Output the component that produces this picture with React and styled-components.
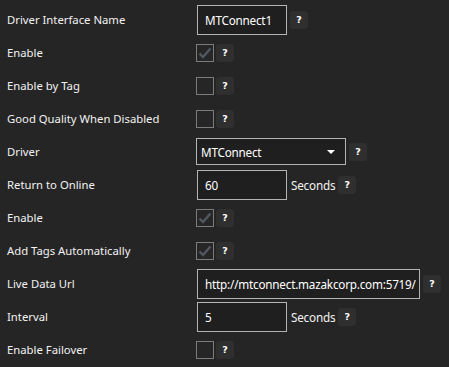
import React from 'react'
import styled, { createGlobalStyle } from 'styled-components'

const GlobalStyle = createGlobalStyle`
  html, body {
    margin: 0;
    background: #252525;
  }
  body {
    font-family: "Noto Sans", "Open Sans", sans-serif;
    color: #f2f2f2;
  }
`

const Form = styled.div`
  padding: 3px 0 0 7px;
  display: flex;
  flex-direction: column;
`
const Row = styled.div`
  display: flex;
  align-items: center;
  height: 33px;
`
const Label = styled.div`
  width: 189px;
  font-size: 11.3px;
  color: #f2f2f2;
  white-space: nowrap;
`
const Control = styled.div`
  display: flex;
  align-items: center;
`
const TextBox = styled.div`
  box-sizing: border-box;
  width: ${p => p.width || 90}px;
  height: 30px;
  margin-left: 1px;
  border: 1px solid #b4b4b4;
  background: #1f1f1f;
  padding: 0 7px;
  display: flex;
  align-items: center;
  font-size: 11.7px;
  letter-spacing: -0.2px;
  color: #fff;
  white-space: nowrap;
  overflow: hidden;
`
const Select = styled.div`
  box-sizing: border-box;
  width: 150px;
  height: 27px;
  border: 1px solid #b4b4b4;
  background: #1f1f1f;
  padding: 0 10px 0 4px;
  display: flex;
  align-items: center;
  justify-content: space-between;
  font-size: 11.7px;
  letter-spacing: -0.2px;
  color: #fff;
`
const Caret = styled.span`
  width: 0;
  height: 0;
  border-left: 4px solid transparent;
  border-right: 4px solid transparent;
  border-top: 4px solid #fff;
`
const Box = styled.div`
  box-sizing: border-box;
  width: 18px;
  height: 18px;
  border: 1px solid #7c7c7c;
  background: #262626;
  display: flex;
  align-items: center;
  justify-content: center;
`
const Unit = styled.span`
  font-size: 11.7px;
  letter-spacing: -0.2px;
  color: #f2f2f2;
  margin-left: 4px;
`
const Help = styled.div`
  width: 18px;
  height: 18px;
  border-radius: 3px;
  background: #2f2f2f;
  margin-left: ${p => p.gap || 2}px;
  display: flex;
  align-items: center;
  justify-content: center;
  font-family: "DejaVu Sans", sans-serif;
  font-weight: bold;
  font-size: 9.5px;
  color: #fff;
`

const Check = ({ checked }) => (
  <Box>
    {checked && (
      <svg width="14" height="12" viewBox="0 0 14 12">
        <path d="M1.5 6.5 L5 10 L12.5 1.5" fill="none" stroke="#525862" strokeWidth="2.4" />
      </svg>
    )}
  </Box>
)

const rows = [
  { label: 'Driver Interface Name', type: 'text', value: 'MTConnect1' },
  { label: 'Enable', type: 'check', checked: true },
  { label: 'Enable by Tag', type: 'check' },
  { label: 'Good Quality When Disabled', type: 'check' },
  { label: 'Driver', type: 'select', value: 'MTConnect' },
  { label: 'Return to Online', type: 'text', value: '60', unit: 'Seconds' },
  { label: 'Enable', type: 'check', checked: true },
  { label: 'Add Tags Automatically', type: 'check', checked: true },
  { label: 'Live Data Url', type: 'text', value: 'http://mtconnect.mazakcorp.com:5719/', width: 223 },
  { label: 'Interval', type: 'text', value: '5', unit: 'Seconds' },
  { label: 'Enable Failover', type: 'check' },
]

const App = () => (
  <>
    <GlobalStyle />
    <Form>
      {rows.map((r, i) => (
        <Row key={i}>
          <Label>{r.label}</Label>
          <Control>
            {r.type === 'text' && <TextBox width={r.width}>{r.value}</TextBox>}
            {r.type === 'select' && (
              <Select>
                {r.value}
                <Caret />
              </Select>
            )}
            {r.type === 'check' && <Check checked={r.checked} />}
            {r.unit && <Unit>{r.unit}</Unit>}
            <Help gap={r.type === 'check' ? 2 : 3}>?</Help>
          </Control>
        </Row>
      ))}
    </Form>
  </>
)

export default App
